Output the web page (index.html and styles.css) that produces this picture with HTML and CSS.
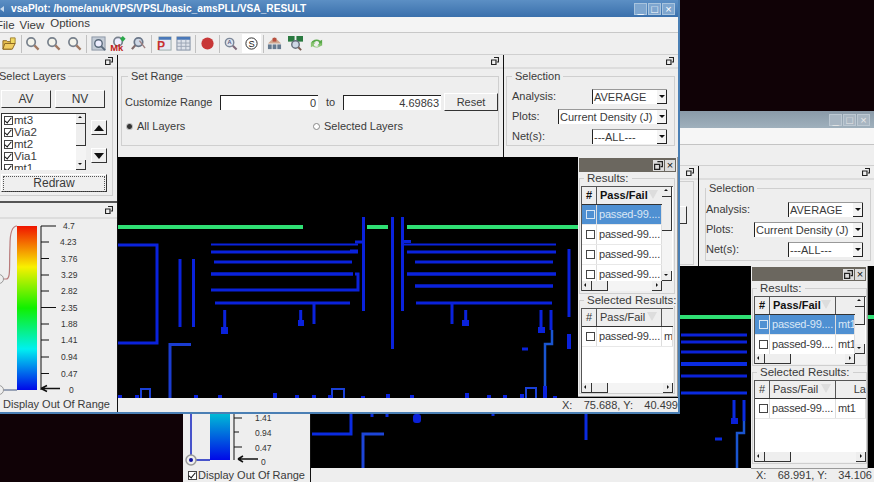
FILE: index.html
```html
<!DOCTYPE html>
<html lang="en">
<head>
    <meta charset="UTF-8">
    <meta name="viewport" content="width=device-width, initial-scale=1.0">
    <title>vsaPlot</title>
    <link rel="stylesheet" href="styles.css">
</head>
<body>
    <svg class="defs" width="0" height="0">
        <defs>
            <linearGradient id="heat" x1="0" y1="0" x2="0" y2="1">
                <stop offset="0" stop-color="#f01400"/>
                <stop offset="0.25" stop-color="#f8f000"/>
                <stop offset="0.5" stop-color="#10f000"/>
                <stop offset="0.75" stop-color="#00f0f0"/>
                <stop offset="1" stop-color="#0008e8"/>
            </linearGradient>
            <linearGradient id="backheat" x1="0" y1="0" x2="0" y2="1">
                <stop offset="0" stop-color="#00f0d0"/>
                <stop offset="1" stop-color="#0008e8"/>
            </linearGradient>
            <symbol id="dock" viewBox="0 0 8 8">
                <path d="M3 .5h4.500v4.500h-1.500M.5 3h4.500v4.500h-4.500z" fill="none" stroke="#222" stroke-width="1.200"/>
            </symbol>
            <symbol id="lens" viewBox="0 0 16 16">
                <circle cx="6.500" cy="6.500" r="4.500" fill="#f4f4ec" stroke="#77808c" stroke-width="1.800"/>
                <path d="M10 10l4.500 4.500" stroke="#a07860" stroke-width="2.400"/>
            </symbol>
        </defs>
    </svg>

    <!-- Окно сзади -->
    <div class="window back-window">
        <div class="titlebar inactive">
            <span class="title-text"></span>
            <span class="win-btn">_</span>
            <span class="win-btn">&#9633;</span>
            <span class="win-btn">&#215;</span>
        </div>
        <div class="menubar back-menu"></div>
        <div class="toolbar back-tools"></div>
        <div class="back-body">
            <div class="back-left">
                <div class="legend-cut">
                    <svg class="back-scale" width="127" height="54" viewBox="183 414 127 54">
                        <path d="M191 414V460H210" fill="none" stroke="#1020c0" stroke-width="1.500"/>
                        <rect x="210" y="400" width="20" height="60" fill="url(#backheat)"/>
                        <path d="M234 400V460M234 418h8M234 432h5M234 447h8" fill="none" stroke="#111"/>
                        <path d="M238 459h20M238 459l5-3M238 459l5 3" fill="none" stroke="#111" stroke-width="1.500"/>
                        <circle cx="191" cy="460" r="5" fill="#eee" stroke="#999" stroke-width="1.500"/>
                        <circle cx="191" cy="460" r="2" fill="#1010a0"/>
                        <text x="255" y="421" class="tick">1.41</text>
                        <text x="255" y="436" class="tick">0.94</text>
                        <text x="255" y="451" class="tick">0.47</text>
                        <text x="261" y="465" class="tick">0</text>
                    </svg>
                    <label class="oor back-oor"><i class="chk on"></i>Display Out Of Range</label>
                </div>
            </div>
            <div class="back-right">
                <div class="dock-row back-docks">
                    <div class="dock back-range">
                        <div class="dock-head"><svg class="dock-ico"><use href="#dock"/></svg></div>
                        <fieldset class="group back-range-group"><button class="btn back-reset"></button></fieldset>
                    </div>
                    <div class="dock selection back-selection">
                        <div class="dock-head"><svg class="dock-ico"><use href="#dock"/></svg></div>
                        <fieldset class="group select-group">
                            <legend>Selection</legend>
                            <div class="sel-row"><span>Analysis:</span><span class="combo short">AVERAGE<i class="combo-btn"></i></span></div>
                            <div class="sel-row"><span>Plots:</span><span class="combo wide">Current Density (J)<i class="combo-btn"></i></span></div>
                            <div class="sel-row"><span>Net(s):</span><span class="combo short">---ALL---<i class="combo-btn"></i></span></div>
                        </fieldset>
                    </div>
                </div>
                <svg class="plot" width="563" height="202" viewBox="311 266 563 202">
                    <g fill="none" stroke="#0a2be0" stroke-width="3">
                        <path d="M312 434H351V414"/>
                        <path d="M363 468V434H384" stroke="#1d45d8"/>
                        <path d="M372 414v3M387 414v3M493 414v2M586 414v26" />
                        <path d="M681 335H747M681 342H747M681 352H747M681 376H747" stroke="#0b22d8"/>
                        <path d="M681 364H747" stroke-width="4"/>
                        <path d="M681 393H747"/>
                        <path d="M734 400V420M744 400V421"/>
                        <path d="M744 421V433H737V468" stroke="#1a55d0" stroke-width="2.500"/>
                        <path d="M715 439H722"/>
                    </g>
                    <rect x="413" y="414" width="8" height="9" rx="3" fill="#0a20d8"/>
                    <rect x="731" y="418" width="7" height="6" fill="#0a20d8"/>
                    <rect x="680" y="315" width="71" height="4" fill="#2fe074"/>
                    <rect x="867" y="315" width="7" height="4" fill="#2fe074"/>
                </svg>
                <div class="statusbar back-status">
                    <span class="st-x">X:</span><span class="st-v">68.991, Y:</span><span class="st-y">34.106</span>
                </div>
            </div>
        </div>

        <div class="float back-float">
            <div class="float-title"><svg class="dock-ico light"><use href="#dock"/></svg><span class="float-x">&#215;</span></div>
            <fieldset class="group res-group back-res">
                <legend>Results:</legend>
                <div class="tbl">
                    <div class="tbl-cells">
                        <div class="hrow strong b-cols"><span>#</span><span>Pass/Fail<i class="sort"></i></span><span></span></div>
                        <div class="trow sel b-cols"><span><i class="chk blue"></i></span><span>passed-99....</span><span>mt1</span></div>
                        <div class="trow b-cols"><span><i class="chk"></i></span><span>passed-99....</span><span>mt1</span></div>
                    </div>
                    <div class="vbar"><i class="ar up"></i><b></b><i class="ar dn"></i></div>
                    <div class="hbar"><i class="ar lf"></i><b></b><i class="ar rt"></i></div>
                    <i class="corner"></i>
                </div>
            </fieldset>
            <fieldset class="group res-group back-sel">
                <legend>Selected Results:</legend>
                <div class="tbl no-v">
                    <div class="tbl-cells">
                        <div class="hrow b-cols"><span>#</span><span>Pass/Fail<i class="sort"></i></span><span class="right">La</span></div>
                        <div class="trow b-cols"><span><i class="chk"></i></span><span>passed-99....</span><span>mt1</span></div>
                    </div>
                    <div class="hbar"><i class="ar lf"></i><b></b><i class="ar rt"></i></div>
                </div>
            </fieldset>
        </div>
    </div>

    <!-- Главное окно -->
    <div class="window main-window">
        <div class="titlebar">
            <i class="win-arrow"></i>
            <span class="title-text">vsaPlot: /home/anuk/VPS/VPSL/basic_amsPLL/VSA_RESULT</span>
            <span class="win-btn">_</span>
            <span class="win-btn">&#9633;</span>
            <span class="win-btn">&#215;</span>
        </div>
        <div class="menubar">
            <span>File</span><span>View</span><span class="menu-opt">Options</span>
        </div>
        <div class="toolbar">
            <svg class="tool" viewBox="0 0 16 16"><path d="M1 14V5h4l1 1h5l-1 8z" fill="#e8c050" stroke="#8a6420"/><path d="M9 2h5v6H9z" fill="#f0d860" stroke="#a08030"/><path d="M1 14l2-6h11l-3 6z" fill="#f0cc60" stroke="#8a6420"/></svg>
            <i class="tool-sep tight"></i>
            <svg class="tool"><use href="#lens"/></svg>
            <svg class="tool"><use href="#lens"/></svg>
            <svg class="tool"><use href="#lens"/></svg>
            <i class="tool-sep"></i>
            <svg class="tool" viewBox="0 0 16 16"><rect x="1" y="1" width="14" height="14" fill="#c4ccd6" stroke="#8a94a4"/><circle cx="8" cy="8" r="4" fill="#eef" stroke="#5a6a7c" stroke-width="1.500"/><path d="M11 11l4 4" stroke="#5a6a7c" stroke-width="2"/></svg>
            <svg class="tool" viewBox="0 0 16 16"><circle cx="6.500" cy="6" r="4.500" fill="#eef" stroke="#77808c" stroke-width="1.800"/><path d="M11.500 0l3 3-3 3-3-3z" fill="#2aa84a"/><text x="-2" y="16" class="tool-mk">Mk</text></svg>
            <svg class="tool near" viewBox="0 0 16 16"><circle cx="8" cy="6.500" r="4.500" fill="#cfd8e6" stroke="#6a7688" stroke-width="1.800"/><path d="M4.500 10l-3.500 4" stroke="#806a6a" stroke-width="2.400"/><path d="M9 5l6 8" stroke="#a08080" stroke-width="1.500"/></svg>
            <i class="tool-sep wide-sep"></i>
            <svg class="tool" viewBox="0 0 16 16"><rect x="2" y="1" width="13" height="14" fill="#e4e8f0" stroke="#9aa"/><rect x="2" y="1" width="13" height="3" fill="#4a78b8"/><text x="0" y="15" class="tool-p">P</text></svg>
            <svg class="tool near" viewBox="0 0 16 16"><rect x="1" y="1" width="14" height="14" fill="#dde2ea" stroke="#7f8ca0"/><rect x="1" y="1" width="14" height="3" fill="#4a78b8"/><path d="M1 7.500h14M1 11h14M5.500 4v11M10.500 4v11" stroke="#9aa4b4"/></svg>
            <i class="tool-sep"></i>
            <svg class="tool" viewBox="0 0 16 16"><circle cx="8" cy="8" r="6.500" fill="#c83838"/></svg>
            <i class="tool-sep tight"></i>
            <svg class="tool" viewBox="0 0 16 16"><circle cx="7" cy="7" r="4.500" fill="#dfe4ee" stroke="#7a8698" stroke-width="1.500"/><path d="M10.500 10.500l4 4" stroke="#806a7a" stroke-width="2.200"/><text x="7" y="9" class="tool-a">A</text></svg>
            <svg class="tool tool-white" viewBox="0 0 16 16"><circle cx="8" cy="8" r="6" fill="#fff" stroke="#222"/><text x="8" y="11.500" class="tool-s">S</text></svg>
            <i class="tool-sep tight"></i>
            <svg class="tool" viewBox="0 0 16 16"><path d="M8 1l7 7H1z" fill="#d0a890"/><rect x="6" y="2" width="4" height="4" fill="#b85040"/><rect x="1" y="9" width="4" height="5" fill="#667a90"/><rect x="6" y="9" width="4" height="5" fill="#667a90"/><rect x="11" y="9" width="4" height="5" fill="#667a90"/></svg>
            <svg class="tool" viewBox="0 0 16 16"><rect x="0" y="0" width="7" height="6" fill="#2a7a40"/><rect x="9" y="0" width="7" height="6" fill="#2a7a40"/><circle cx="8" cy="9" r="4" fill="#cfd8e6" stroke="#66707c" stroke-width="1.500"/><path d="M11 12l3 3" stroke="#7a5a50" stroke-width="2"/></svg>
            <svg class="tool" viewBox="0 0 16 16"><path d="M2 8a6 5 0 0 1 10-3l2-1v6H9l2-2a3 3 0 0 0-6 1z" fill="#58a848"/><path d="M14 8a6 5 0 0 1-10 3l-2 1V7h5l-2 2a3 3 0 0 0 6-1z" fill="#88c470"/></svg>
        </div>
        <div class="main-body">
            <div class="left-col">
                <div class="dock layers">
                    <div class="dock-head"><svg class="dock-ico"><use href="#dock"/></svg></div>
                    <fieldset class="group layer-group">
                        <legend>Select Layers</legend>
                        <div class="btn-row"><button class="btn">AV</button><button class="btn">NV</button></div>
                        <div class="list-row">
                            <div class="layer-list">
                                <div class="layer-items">
                                    <div><i class="chk on"></i>mt3</div>
                                    <div><i class="chk on"></i>Via2</div>
                                    <div><i class="chk on"></i>mt2</div>
                                    <div><i class="chk on"></i>Via1</div>
                                    <div><i class="chk on"></i>mt1</div>
                                </div>
                                <div class="vbar"><i class="ar up"></i><b></b><i class="ar dn"></i></div>
                            </div>
                            <div class="move-btns">
                                <button class="btn move"><i class="tri-up"></i></button>
                                <button class="btn move"><i class="tri-dn"></i></button>
                            </div>
                        </div>
                        <button class="btn redraw"><span>Redraw</span></button>
                    </fieldset>
                </div>
                <div class="dock scale-dock">
                    <div class="dock-head scale-head"><svg class="dock-ico"><use href="#dock"/></svg></div>
                    <svg class="scale" width="125" height="176" viewBox="-8 219 125 176">
                        <path d="M-1 279H6C11 279 9 268 10 245C10 232 12 226 17 226" fill="none" stroke="#b87a7a" stroke-width="1.200"/>
                        <path d="M-1 390H17" stroke="#607090" stroke-width="1.200"/>
                        <rect x="17" y="226" width="20" height="164" fill="url(#heat)"/>
                        <path d="M41 226V390M41 226h15M41 242h8M41 258.500h8M41 275h8M41 291h8M41 307.500h15M41 324h8M41 340h8M41 357h8M41 373.500h8" fill="none" stroke="#111"/>
                        <path d="M42 388.500h18M41 388.500l6-3M41 388.500l6 3" fill="none" stroke="#111" stroke-width="1.500"/>
                        <circle cx="-1" cy="279" r="4.500" fill="#eee" stroke="#999"/>
                        <circle cx="-1" cy="390" r="4.500" fill="#eee" stroke="#999"/>
                        <text x="63" y="229" class="tick">4.7</text>
                        <text x="60" y="245" class="tick">4.23</text>
                        <text x="61" y="262" class="tick">3.76</text>
                        <text x="61" y="278" class="tick">3.29</text>
                        <text x="61" y="294" class="tick">2.82</text>
                        <text x="61" y="311" class="tick">2.35</text>
                        <text x="61" y="327" class="tick">1.88</text>
                        <text x="61" y="343" class="tick">1.41</text>
                        <text x="61" y="360" class="tick">0.94</text>
                        <text x="61" y="377" class="tick">0.47</text>
                        <text x="69" y="393" class="tick">0</text>
                    </svg>
                    <label class="oor">Display Out Of Range</label>
                </div>
            </div>
            <div class="right-col">
                <div class="dock-row">
                    <div class="dock range">
                        <div class="dock-head"><svg class="dock-ico"><use href="#dock"/></svg></div>
                        <fieldset class="group range-group">
                            <legend>Set Range</legend>
                            <div class="range-row">
                                <span class="range-label">Customize Range</span>
                                <span class="field">0</span>
                                <span class="range-to">to</span>
                                <span class="field">4.69863</span>
                                <button class="btn reset">Reset</button>
                            </div>
                            <div class="radio-row">
                                <span class="radio-item"><i class="radio"></i>All Layers</span>
                                <span class="radio-item second"><i class="radio off"></i>Selected Layers</span>
                            </div>
                        </fieldset>
                    </div>
                    <div class="dock selection">
                        <div class="dock-head"><svg class="dock-ico"><use href="#dock"/></svg></div>
                        <fieldset class="group select-group">
                            <legend>Selection</legend>
                            <div class="sel-row"><span>Analysis:</span><span class="combo short">AVERAGE<i class="combo-btn"></i></span></div>
                            <div class="sel-row"><span>Plots:</span><span class="combo wide">Current Density (J)<i class="combo-btn"></i></span></div>
                            <div class="sel-row"><span>Net(s):</span><span class="combo short">---ALL---<i class="combo-btn"></i></span></div>
                        </fieldset>
                    </div>
                </div>
                <svg class="plot" width="560" height="241" viewBox="118 157 560 241">
                    <g fill="#2fe074">
                        <rect x="118" y="225" width="185" height="4"/>
                        <rect x="367" y="225" width="21" height="4"/>
                        <rect x="407" y="225" width="171" height="4"/>
                    </g>
                    <g fill="none" stroke="#0a22dc" stroke-width="3">
                        <path d="M118 245H157V343H118"/>
                        <path d="M180 259V327M193.500 259V327"/>
                        <path d="M211 244.500H358" stroke-width="2"/>
                        <path d="M211 252H358"/>
                        <path d="M214 262H352"/>
                        <path d="M211 274H353" stroke-width="3.500"/>
                        <path d="M211 290H355"/>
                        <path d="M215 303H350"/>
                        <path d="M224.700 310V328M300.700 310V321M314 303V324"/>
                        <path d="M355 274H358V290H355M355 242H363M350 251H358"/>
                        <path d="M170 398V344.500H191" stroke="#1a3cd0"/>
                        <path d="M363.500 217V311M392.500 217V349M402.500 217V311"/>
                        <path d="M403 244.500H556" stroke-width="2"/>
                        <path d="M403 241.500h8M407 252H556M415 262H553"/>
                        <path d="M407 274H556" stroke-width="3.500"/>
                        <path d="M415 286H553" stroke-width="3.500"/>
                        <path d="M416 303H552M452 303V324M465.700 310V321M541 310V328M551 310V330"/>
                        <path d="M569 249V317"/>
                        <path d="M569 334V349" stroke-width="4"/>
                        <path d="M522 349H528"/>
                        <path d="M552 330V344H545V398" stroke="#1a55d0" stroke-width="2.500"/>
                        <path d="M141 398V389H150V398M332 398V389H344V398M526 398V388H536V398" stroke-width="2" stroke="#1a40d8"/>
                    </g>
                    <g fill="#0a22dc">
                        <rect x="221" y="327" width="7" height="7"/>
                        <rect x="298" y="320" width="6" height="6"/>
                        <rect x="462" y="320" width="7" height="6"/>
                        <rect x="538" y="327" width="7" height="6"/>
                        <path d="M118 395h4v3h-4zM135 395h4v3h-4zM194 395h4v3h-4zM218 395h4v3h-4zM273 393h4v5h-4zM295 395h4v3h-4zM312 395h4v3h-4zM328 395h4v3h-4zM361 396h4v2h-4zM386 394h4v4h-4zM410 395h4v3h-4zM465 393h4v5h-4zM487 395h4v3h-4zM503 395h4v3h-4zM520 394h4v4h-4zM543 386h4v12h-4zM553 396h4v2h-4z"/>
                    </g>
                </svg>
                <div class="statusbar">
                    <span class="st-x">X:</span><span class="st-v">75.688, Y:</span><span class="st-y">40.499</span>
                </div>
            </div>
        </div>

        <div class="float main-float">
            <div class="float-title"><svg class="dock-ico light"><use href="#dock"/></svg><span class="float-x">&#215;</span></div>
            <fieldset class="group res-group main-res">
                <legend>Results:</legend>
                <div class="tbl">
                    <div class="tbl-cells">
                        <div class="hrow strong m-cols"><span>#</span><span>Pass/Fail<i class="sort"></i></span></div>
                        <div class="trow sel m-cols"><span><i class="chk blue"></i></span><span>passed-99....</span></div>
                        <div class="trow m-cols"><span><i class="chk"></i></span><span>passed-99....</span></div>
                        <div class="trow m-cols"><span><i class="chk"></i></span><span>passed-99....</span></div>
                        <div class="trow m-cols"><span><i class="chk"></i></span><span>passed-99....</span></div>
                    </div>
                    <div class="vbar"><i class="ar up"></i><b></b><i class="ar dn"></i></div>
                    <div class="hbar"><i class="ar lf"></i><b></b><i class="ar rt"></i></div>
                    <i class="corner"></i>
                </div>
            </fieldset>
            <fieldset class="group res-group main-sel">
                <legend>Selected Results:</legend>
                <div class="tbl no-v">
                    <div class="tbl-cells">
                        <div class="hrow m2-cols"><span>#</span><span>Pass/Fail<i class="sort"></i></span><span></span></div>
                        <div class="trow m2-cols"><span><i class="chk"></i></span><span>passed-99....</span><span>m</span></div>
                    </div>
                    <div class="hbar"><i class="ar lf"></i><b></b><i class="ar rt"></i></div>
                </div>
            </fieldset>
        </div>
    </div>
</body>
</html>
```

FILE: styles.css
```css
html, body {
    margin: 0;
    height: 100%;
}
body {
    position: relative;
    width: 874px;
    height: 482px;
    overflow: hidden;
    background-color: #100206;
    font-family: "Liberation Sans", Arial, sans-serif;
    font-size: 11px;
    color: #3a3a3a;
}
.defs {
    position: absolute;
}
i {
    font-style: normal;
}

/* Окна */
.window {
    position: absolute;
    display: flex;
    flex-direction: column;
    box-sizing: border-box;
    background-color: #eeeeee;
    overflow: hidden;
}
.main-window {
    left: -8px;
    top: 0;
    width: 688px;
    height: 414px;
    border-right: 2px solid #4a7fb4;
    border-bottom: 2px solid #4a7fb4;
}
.back-window {
    left: 183px;
    top: 111px;
    width: 691px;
    height: 371px;
}
.titlebar {
    flex: none;
    height: 17px;
    display: flex;
    align-items: center;
    gap: 1px;
    padding-right: 3px;
    background: linear-gradient(#5c8fc4, #3a70ac);
    color: #ffffff;
}
.titlebar.inactive {
    background: linear-gradient(#8a9aa8, #9fb0bc);
    padding-right: 4px;
}
.win-arrow {
    flex: none;
    margin-left: 8px;
    border-top: 3px solid transparent;
    border-bottom: 3px solid transparent;
    border-right: 4px solid #c4d8ec;
}
.title-text {
    flex: 1;
    padding-left: 6px;
    font-size: 10.200px;
    font-weight: bold;
    white-space: nowrap;
}
.win-btn {
    width: 13px;
    height: 12px;
    line-height: 11px;
    text-align: center;
    font-size: 11px;
    background-color: #7ea6cf;
    border: 1px solid #a8c4de;
    box-sizing: border-box;
    color: #ffffff;
}
.inactive .win-btn {
    background-color: #a8b6c2;
    border-color: #bcc8d2;
    color: #e8e8e8;
}
.menubar {
    flex: none;
    box-sizing: border-box;
    height: 15px;
    display: flex;
    gap: 5px;
    padding: 1px 0 0 4px;
    background-color: #f4f4f4;
    line-height: 15px;
    font-size: 11.500px;
}
.menu-opt {
    margin: -2px 0 0 1px;
}
.back-menu {
    height: 17px;
    background-color: #f6f6f6;
    border-bottom: 1px solid #c4c4c4;
}
.toolbar {
    flex: none;
    box-sizing: border-box;
    height: 23px;
    display: flex;
    align-items: center;
    padding-left: 10px;
    gap: 6px;
    background-color: #efefef;
    border-top: 1px solid #c8c8c8;
    border-bottom: 1px solid #d0d0d0;
}
.back-tools {
    height: 21px;
    border-top: none;
}
.tool {
    width: 15px;
    height: 15px;
    flex: none;
    overflow: visible;
}
.tool.near {
    margin-left: -2px;
}
.tool-white {
    background-color: #ffffff;
    outline: 2px solid #ffffff;
}
.tool-sep {
    width: 1px;
    height: 18px;
    background-color: #c0c0c0;
    margin: 0 -2px;
}
.tool-sep.tight {
    margin: 0 -3px 0 -2px;
}
.tool-sep.wide-sep {
    margin: 0 -1px;
}
.tool-mk {
    font: bold 10px "Liberation Sans", sans-serif;
    fill: #c02020;
}
.tool-p {
    font: bold 13px "Liberation Sans", sans-serif;
    fill: #c83030;
}
.tool-a {
    font: bold 6px "Liberation Sans", sans-serif;
    fill: #5a5a80;
    text-anchor: middle;
}
.tool-s {
    font: 10px "Liberation Sans", sans-serif;
    fill: #222222;
    text-anchor: middle;
}

/* Раскладка */
.main-body {
    flex: 1;
    display: flex;
    min-height: 0;
}
.left-col {
    flex: none;
    width: 125px;
    border-right: 1px solid #111111;
    display: flex;
    flex-direction: column;
}
.right-col {
    flex: 1;
    display: flex;
    flex-direction: column;
    min-width: 0;
}
.dock-row {
    flex: none;
    height: 102px;
    display: flex;
    background-color: #eeeeee;
}
.dock-head {
    height: 12px;
    display: flex;
    justify-content: flex-end;
    align-items: center;
    padding-right: 4px;
    border-bottom: 2px solid #dddddd;
}
.scale-head {
    height: 14px;
}
.dock-ico {
    width: 8px;
    height: 8px;
}
.dock-ico.light {
    width: 9px;
    height: 9px;
    background-color: #dddddd;
    padding: 1px;
}
.range {
    width: 385px;
    flex: none;
    border-right: 1px solid #111111;
}
.selection {
    flex: 1;
}

/* Рамки с заголовком */
.group {
    margin: 0;
    padding: 0;
    border: 1px solid #cfcfcf;
    min-width: 0;
    box-sizing: border-box;
}
.group legend {
    padding: 0 3px;
    margin-left: 1px;
    font-size: 11px;
    line-height: 12px;
    white-space: nowrap;
}
.layers {
    height: 148px;
    border-bottom: 2px solid #555555;
    box-sizing: border-box;
}
.layer-group {
    margin: 1px 4px 0 0;
    height: 126px;
    padding: 7px 0 0 8px;
}
.layer-group legend {
    margin-left: -4px;
    padding: 0 2px;
}
.btn {
    font: inherit;
    color: inherit;
    padding: 0;
    background-color: #efefef;
    border: 1px solid;
    border-color: #ffffff #333333 #333333 #ffffff;
    box-sizing: border-box;
}
.btn-row {
    display: flex;
    gap: 4px;
    margin-top: 1px;
}
.btn-row .btn {
    width: 50px;
    height: 18px;
    font-size: 12px;
}
.list-row {
    display: flex;
    gap: 5px;
    margin-top: 5px;
}
.layer-list {
    width: 85px;
    height: 57px;
    display: flex;
    background-color: #ffffff;
    border-top: 1px solid #333333;
    border-left: 1px solid #333333;
    box-sizing: border-box;
    overflow: hidden;
}
.layer-items {
    flex: 1;
    padding-left: 2px;
    font-size: 11.500px;
    line-height: 12px;
}
.layer-items .chk {
    margin-right: 1px;
}
.move-btns {
    display: flex;
    flex-direction: column;
    gap: 13px;
    padding-top: 7px;
}
.move {
    width: 16px;
    height: 15px;
    display: flex;
    align-items: center;
    justify-content: center;
}
.tri-up, .tri-dn {
    border-left: 5px solid transparent;
    border-right: 5px solid transparent;
}
.tri-up {
    border-bottom: 6px solid #111111;
}
.tri-dn {
    border-top: 6px solid #111111;
}
.redraw {
    display: block;
    width: 106px;
    height: 18px;
    margin: 4px 0 0 0;
    font-size: 12px;
    padding: 1px;
}
.redraw span {
    display: block;
    height: 14px;
    line-height: 13px;
    border: 1px dotted #555555;
}

/* Шкала */
.scale-dock {
    flex: 1;
    position: relative;
}
.scale {
    display: block;
}
.tick {
    font: 8.500px "Liberation Sans", sans-serif;
    fill: #333333;
}
.oor {
    display: block;
    padding-left: 11px;
    font-size: 11px;
    line-height: 14px;
    margin-top: 2px;
    white-space: nowrap;
}

/* Set Range */
.range-group {
    margin: 1px 4px 0 3px;
    height: 76px;
    padding: 11px 0 0 3px;
}
.range-group legend {
    margin-left: 3px;
}
.range-row {
    display: flex;
    align-items: center;
    height: 18px;
}
.range-label {
    width: 95px;
}
.field {
    width: 98px;
    height: 15px;
    box-sizing: border-box;
    background-color: #ffffff;
    border-top: 1px solid #222222;
    border-left: 1px solid #222222;
    text-align: right;
    padding-right: 2px;
    line-height: 14px;
}
.range-to {
    width: 25px;
    text-align: center;
}
.reset {
    width: 54px;
    height: 18px;
    margin-left: 3px;
}
.radio-row {
    display: flex;
    margin-top: 9px;
    padding-left: 1px;
}
.radio-item {
    display: flex;
    align-items: center;
    gap: 4px;
    width: 187px;
}
.radio-item.second {
    width: auto;
}
.radio {
    width: 7px;
    height: 7px;
    border-radius: 50%;
    background: radial-gradient(#333333 40%, #bbbbbb 60%);
}
.radio.off {
    background: #ffffff;
    border: 1px solid #888888;
    box-sizing: border-box;
}

/* Selection */
.select-group {
    margin: 1px 3px 0 2px;
    height: 76px;
    padding: 4px 7px 0 5px;
}
.select-group legend {
    margin-left: 0;
}
.sel-row {
    display: flex;
    justify-content: space-between;
    align-items: center;
    height: 20px;
}
.combo {
    position: relative;
    height: 15px;
    box-sizing: border-box;
    background-color: #ffffff;
    border-left: 1px solid #222222;
    border-top: 1px solid #999999;
    padding-left: 1px;
    line-height: 14px;
    white-space: nowrap;
}
.combo.short {
    width: 75px;
}
.combo.wide {
    width: 109px;
}
.combo-btn {
    position: absolute;
    right: 0;
    top: 0;
    bottom: 0;
    width: 10px;
    background-color: #f4f4f4;
    border-right: 1px solid #222222;
    border-bottom: 1px solid #222222;
    box-sizing: border-box;
}
.combo-btn::after {
    content: "";
    position: absolute;
    left: 2px;
    top: 5px;
    border-left: 3px solid transparent;
    border-right: 3px solid transparent;
    border-top: 3px solid #111111;
}

/* Холст и статус */
.plot {
    flex: none;
    display: block;
    background-color: #000000;
}
.statusbar {
    flex: none;
    height: 14px;
    display: flex;
    justify-content: flex-end;
    line-height: 15px;
    background-color: #eeeeee;
    overflow: hidden;
    white-space: nowrap;
}
.st-x {
    width: 15px;
}
.st-v {
    width: 56px;
    text-align: right;
}
.st-y {
    width: 45px;
    text-align: right;
}

/* Плавающие панели */
.float {
    position: absolute;
    box-sizing: border-box;
    background-color: #eeeeee;
    display: flex;
    flex-direction: column;
    border-right: 1px solid #999999;
    border-bottom: 1px solid #999999;
}
.main-float {
    left: 586px;
    top: 157px;
    width: 100px;
    height: 240px;
}
.back-float {
    left: 568px;
    top: 155px;
    width: 117px;
    height: 203px;
}
.float-title {
    flex: none;
    height: 14px;
    display: flex;
    justify-content: flex-end;
    align-items: center;
    gap: 1px;
    padding-right: 1px;
    background-color: #6b675f;
    margin: 1px 1px 0;
}
.float-x {
    width: 10px;
    height: 11px;
    line-height: 10px;
    text-align: center;
    background-color: #dddddd;
    color: #111111;
    font-size: 11px;
}
.res-group legend {
    margin-left: 3px;
    font-size: 11.500px;
}
.res-group {
    margin: 0 2px 0 1px;
    padding: 2px 1px 0;
}
.back-float .res-group {
    margin-right: 0;
    padding-right: 0;
}
.main-res {
    height: 122px;
}
.main-sel {
    height: 100px;
}
.back-res {
    height: 84px;
    margin-top: 1px;
}
.back-sel {
    height: 98px;
}
.tbl {
    display: grid;
    grid-template-columns: 1fr 11px;
    grid-template-rows: 1fr 10px;
    background-color: #ffffff;
    border-top: 1px solid #555555;
    border-left: 1px solid #555555;
    box-sizing: border-box;
    overflow: hidden;
}
.main-res .tbl {
    height: 105px;
}
.main-sel .tbl {
    height: 85px;
}
.back-res .tbl {
    height: 68px;
}
.back-sel .tbl {
    height: 82px;
}
.tbl.no-v {
    grid-template-columns: 1fr;
}
.tbl-cells {
    overflow: hidden;
    min-width: 0;
    min-height: 0;
}
.hrow, .trow {
    display: grid;
    white-space: nowrap;
    font-size: 11px;
}
.hrow {
    height: 17px;
    line-height: 16px;
    background-color: #eeeeee;
    border-bottom: 1px solid #333333;
}
.hrow.strong {
    font-weight: bold;
    color: #111111;
}
.hrow > span {
    border-right: 1px solid #555555;
    position: relative;
    padding-left: 3px;
    overflow: hidden;
}
.hrow > span:first-child {
    padding: 0;
    text-align: center;
}
.hrow > span:last-child {
    border-right: none;
}
.right {
    text-align: right;
}
.sort {
    position: absolute;
    right: 4px;
    top: 3px;
    border-left: 5px solid transparent;
    border-right: 5px solid transparent;
    border-top: 9px solid #dddddd;
}
.trow {
    height: 20px;
    line-height: 19px;
    border-bottom: 1px solid #e8e8e8;
    box-sizing: border-box;
    letter-spacing: -0.2px;
}
.trow > span {
    padding-left: 2px;
    overflow: hidden;
    border-right: 1px solid #dddddd;
}
.trow > span:first-child {
    padding-left: 4px;
}
.trow.sel {
    background-color: #4f90d2;
    color: #dbe8f6;
}
.m-cols {
    grid-template-columns: 15px 1fr;
}
.m2-cols {
    grid-template-columns: 15px 65px 1fr;
}
.b-cols {
    grid-template-columns: 15px 66px 1fr;
}
.chk {
    display: inline-block;
    width: 9px;
    height: 9px;
    box-sizing: border-box;
    border: 1px solid #444444;
    background-color: #ffffff;
    vertical-align: -1px;
    position: relative;
}
.chk.blue {
    background-color: #4f90d2;
    border-color: #d8e6f4;
}
.chk.on::after {
    content: "";
    position: absolute;
    left: 1px;
    top: -1px;
    width: 3px;
    height: 6px;
    border-right: 1.500px solid #111111;
    border-bottom: 1.500px solid #111111;
    transform: rotate(40deg);
}
.back-oor .chk {
    margin-right: 1px;
}
.back-oor.oor {
    padding-left: 5px;
}

/* Полосы прокрутки */
.vbar {
    flex: none;
    width: 10px;
    display: flex;
    flex-direction: column;
    background-color: #f4f4f4;
    grid-row: 1;
    grid-column: 2;
}
.vbar b {
    height: 22px;
    background-color: #eeeeee;
    border-right: 1px solid #333333;
    border-bottom: 1px solid #333333;
    box-sizing: border-box;
}
.main-res .vbar b {
    height: 34px;
}
.back-res .vbar b {
    height: 18px;
}
.vbar .dn {
    margin-top: auto;
}
.hbar {
    grid-row: 2;
    grid-column: 1;
    display: flex;
    background-color: #f4f4f4;
    min-width: 0;
}
.hbar b {
    width: 16px;
    background-color: #eeeeee;
    border-right: 1px solid #333333;
    border-bottom: 1px solid #333333;
    box-sizing: border-box;
}
.back-float .hbar b {
    width: 26px;
}
.hbar .rt {
    margin-left: auto;
}
.corner {
    grid-row: 2;
    grid-column: 2;
    background-color: #eeeeee;
}
.ar {
    position: relative;
    flex: none;
    width: 10px;
    height: 10px;
    background-color: #eeeeee;
    border-right: 1px solid #333333;
    border-bottom: 1px solid #333333;
    box-sizing: border-box;
}
.ar::after {
    content: "";
    position: absolute;
    left: 2px;
    top: 2px;
    border: 2.500px solid transparent;
}
.ar.up::after {
    top: 0;
    border-bottom-color: #111111;
}
.ar.dn::after {
    top: 3px;
    border-top-color: #111111;
}
.ar.lf::after {
    left: 0;
    border-right-color: #111111;
}
.ar.rt::after {
    left: 4px;
    border-left-color: #111111;
}

/* Заднее окно */
.back-body {
    flex: 1;
    display: flex;
    min-height: 0;
}
.back-left {
    flex: none;
    width: 128px;
    display: flex;
    flex-direction: column;
    justify-content: flex-end;
    border-right: 1px solid #111111;
    box-sizing: border-box;
}
.back-scale {
    display: block;
}
.back-oor {
    margin: 0;
    height: 14px;
}
.back-right {
    flex: 1;
    display: flex;
    flex-direction: column;
    min-width: 0;
}
.back-docks {
    height: 100px;
}
.back-range {
    flex: none;
    width: 387px;
    border-right: 1px solid #111111;
}
.back-range-group {
    margin: 1px 4px 0 3px;
    height: 84px;
    position: relative;
}
.back-reset {
    position: absolute;
    right: 6px;
    top: 24px;
    width: 54px;
    height: 18px;
}
.back-selection .select-group {
    margin: 2px 3px 0 6px;
    height: 79px;
    padding: 5px 7px 0 0;
}
.back-status {
    height: 14px;
    padding-right: 2px;
}
```
